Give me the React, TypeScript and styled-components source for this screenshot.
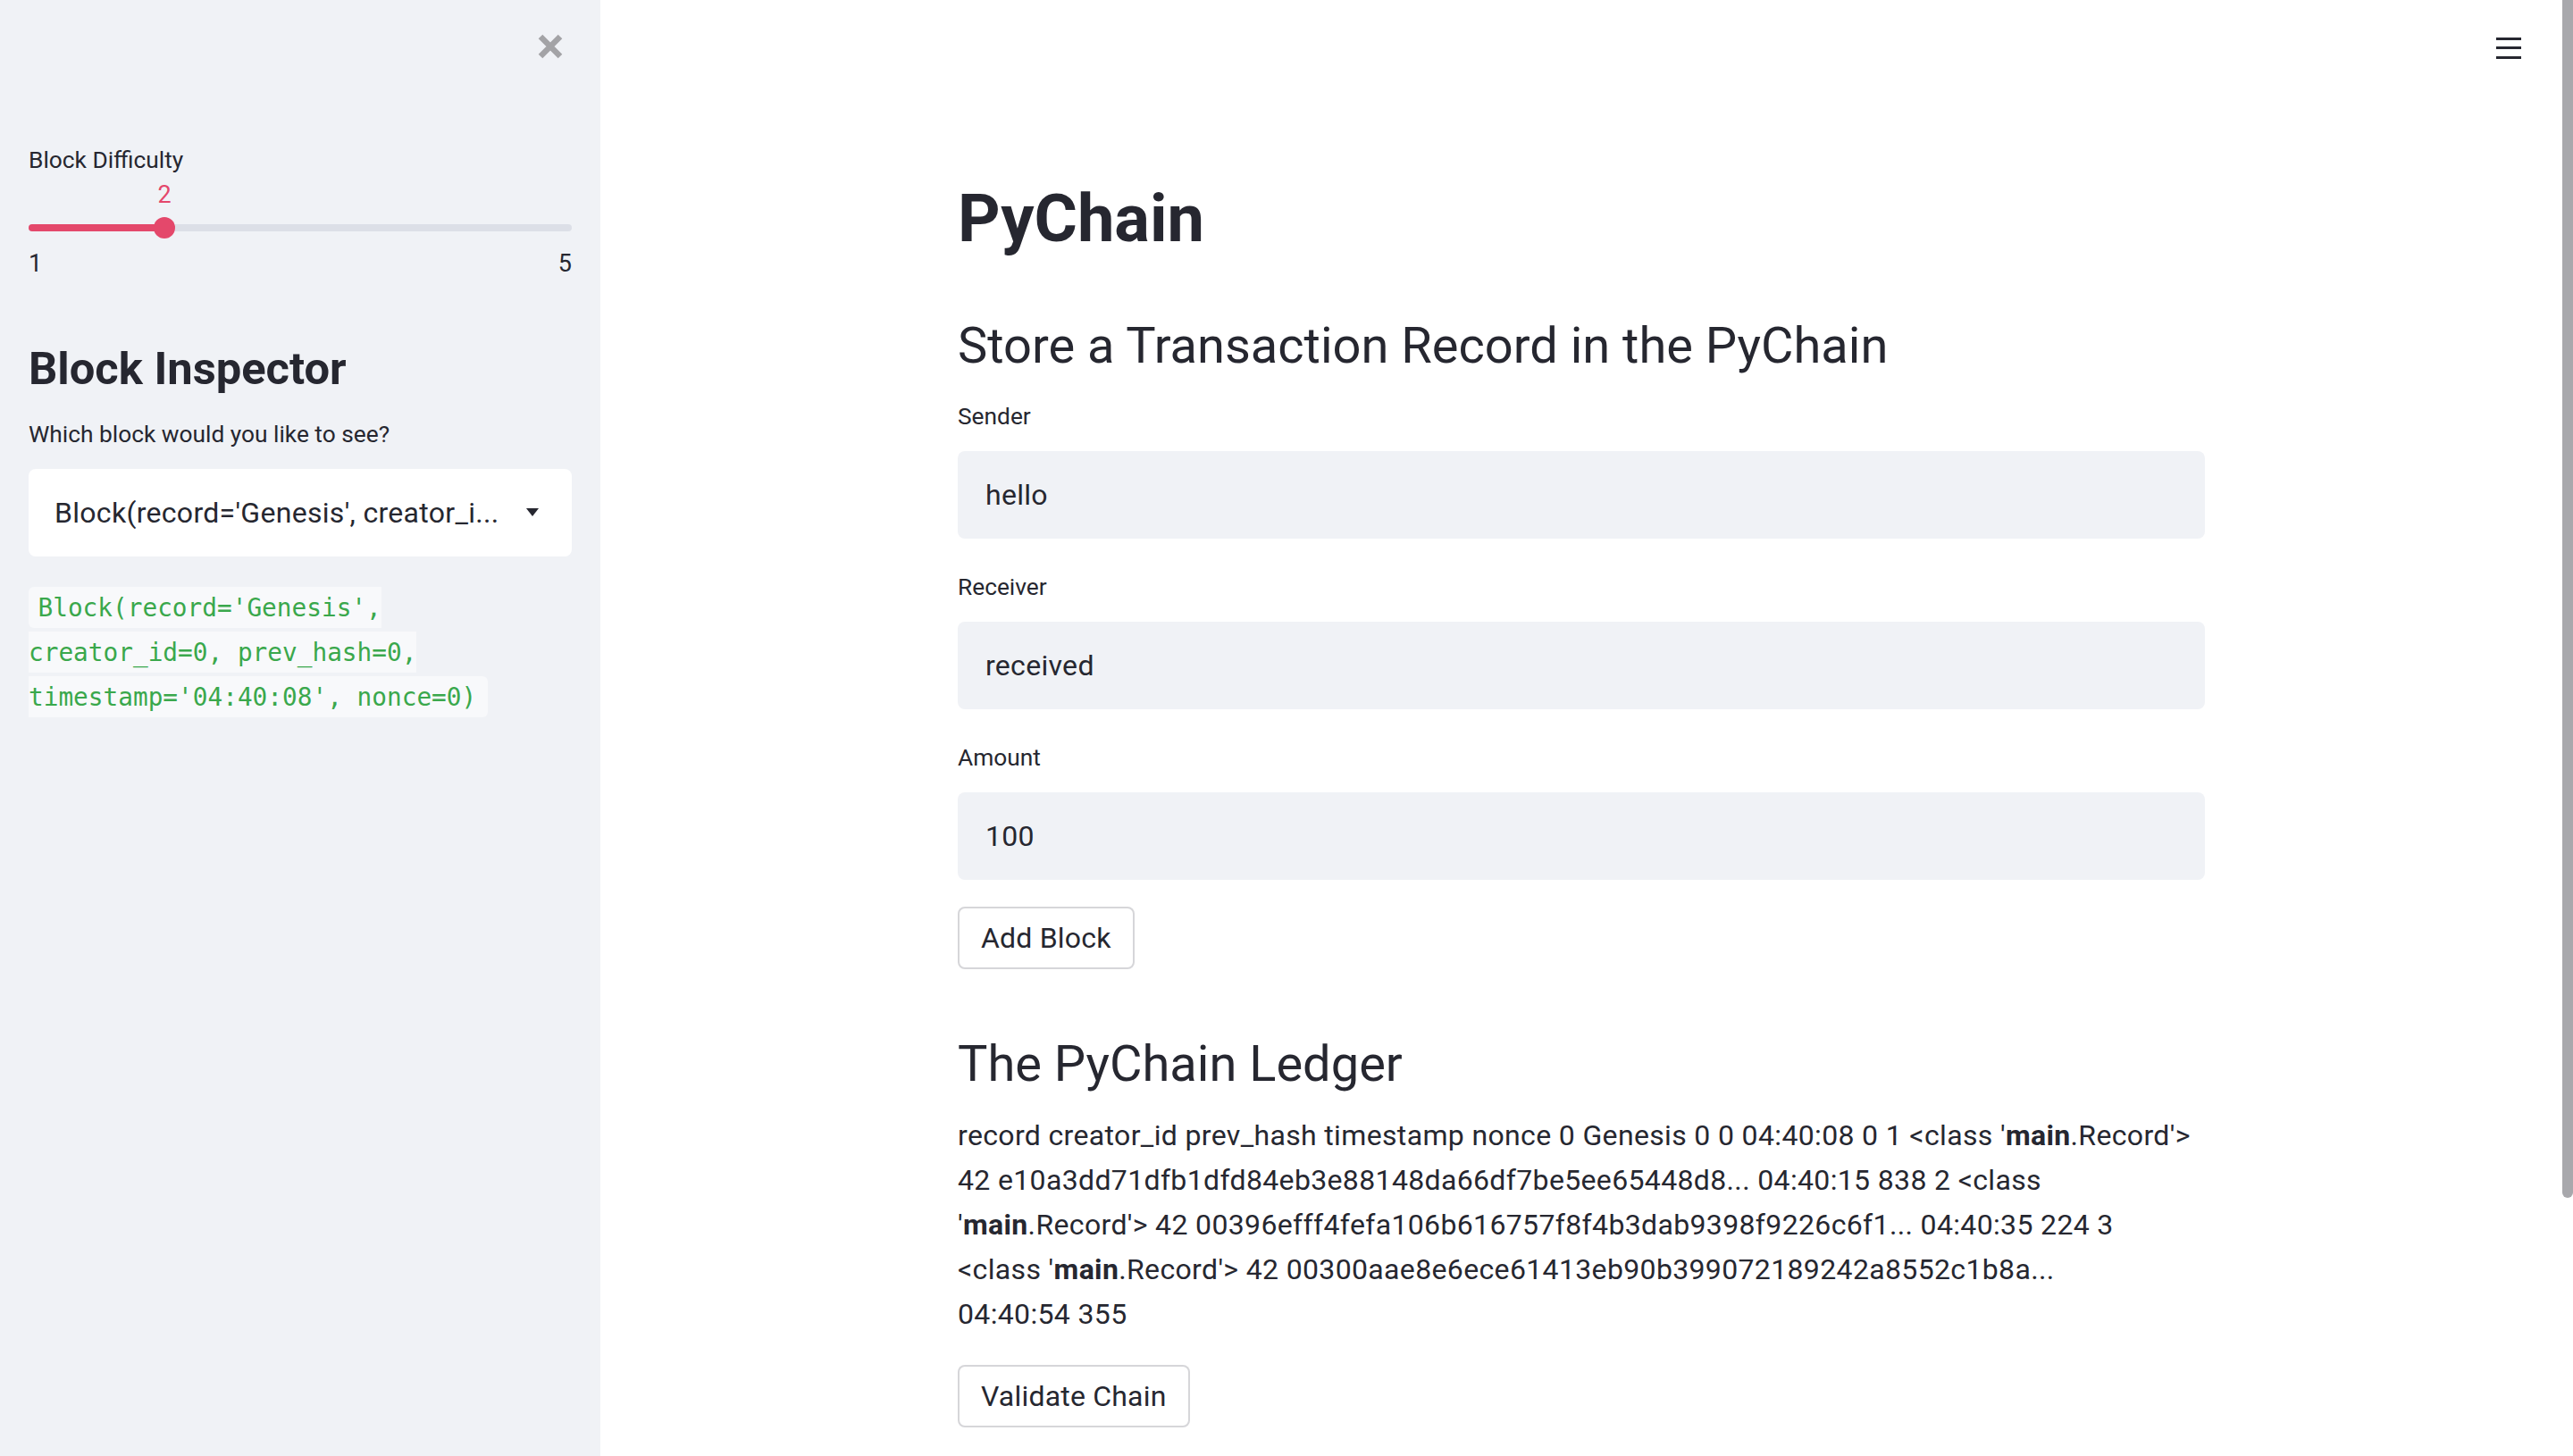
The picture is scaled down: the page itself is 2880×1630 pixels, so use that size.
import React from 'react';
import styled, { createGlobalStyle } from 'styled-components';

const GlobalStyle = createGlobalStyle`
  html, body { margin: 0; padding: 0; background: #ffffff; }
  body { font-family: Roboto, "Liberation Sans", sans-serif; color: #262730; }
  * { box-sizing: border-box; }
`;

const Shell = styled.div`
  display: flex;
  width: 2880px;
  height: 1630px;
  overflow: hidden;
`;

const Sidebar = styled.aside`
  width: 672px;
  flex: none;
  background: #f0f2f6;
  padding: 0 32px;
  display: flex;
  flex-direction: column;
`;

const SidebarTop = styled.div`
  display: flex;
  justify-content: flex-end;
  padding: 38px 10px 0 0;
  height: 66px;
`;

const CloseButton = styled.button`
  width: 28px;
  height: 28px;
  padding: 0;
  border: 0;
  background: none;
  display: flex;
`;

const WidgetLabel = styled.div<{ $mt: number }>`
  margin-top: ${(p) => p.$mt}px;
  font-size: 26.3px;
  line-height: 36px;
  height: 36px;
  color: #262730;
`;

const SliderBox = styled.div`
  margin-top: 3px;
`;

const ValueRow = styled.div`
  position: relative;
  height: 36px;
`;

const ValueBubble = styled.span`
  position: absolute;
  top: 0;
  transform: translateX(-50%);
  font-size: 27px;
  line-height: 36px;
  color: #e4486b;
`;

const TrackWrap = styled.div`
  position: relative;
  height: 24px;
  margin-top: 7.3px;
  display: flex;
  align-items: center;
`;

const Track = styled.div`
  width: 100%;
  height: 8px;
  border-radius: 4px;
  background: #dcdfe7;
  overflow: hidden;
`;

const TrackFill = styled.div`
  height: 100%;
  background: #e4486b;
`;

const Thumb = styled.div`
  position: absolute;
  top: 0;
  width: 24px;
  height: 24px;
  border-radius: 50%;
  background: #e4486b;
  transform: translateX(-50%);
`;

const RangeRow = styled.div`
  display: flex;
  justify-content: space-between;
  margin-top: 9.7px;
  font-size: 27px;
  line-height: 36px;
`;

const SideHeading = styled.h2`
  margin: 71.2px 0 0;
  font-size: 50.7px;
  line-height: 58px;
  font-weight: 700;
`;

const SelectBox = styled.div`
  margin-top: 20.6px;
  height: 98px;
  background: #ffffff;
  border-radius: 8px;
  display: flex;
  align-items: center;
  padding: 0 37px 0 29px;
`;

const SelectValue = styled.span`
  flex: 1;
  font-size: 32px;
  line-height: 40px;
  letter-spacing: 0.3px;
  white-space: nowrap;
  overflow: hidden;
`;

const CodeParagraph = styled.p`
  margin: 33px 0 0;
  font-family: "DejaVu Sans Mono", "Liberation Mono", monospace;
  font-size: 27.75px;
  line-height: 50px;
`;

const InlineCode = styled.code`
  font-family: inherit;
  color: #3aa84c;
  background: #f8f9fb;
  padding: 6.85px 13px 6.85px 10.5px;
  border-radius: 6px;
`;

const Main = styled.main`
  flex: 1;
  min-width: 0;
  position: relative;
  display: flex;
`;

const MenuButton = styled.button`
  position: absolute;
  top: 41px;
  right: 58px;
  width: 28px;
  height: 26px;
  padding: 0;
  border: 0;
  background: none;
  display: flex;
`;

const MainScroll = styled.div`
  flex: 1;
  padding-top: 200.7px;
`;

const ScrollTrack = styled.div`
  width: 12px;
  flex: none;
`;

const ScrollThumb = styled.div`
  height: 1341px;
  background: #a8a8ac;
  border-radius: 0 0 6px 6px;
`;

const Block = styled.div`
  width: 1396px;
  margin: 0 auto;
`;

const Title = styled.h1`
  margin: 0;
  font-size: 74px;
  line-height: 88px;
  font-weight: 700;
`;

const Subheader = styled.h3<{ $mt: number }>`
  margin: ${(p) => p.$mt}px 0 0;
  font-size: 56px;
  line-height: 68px;
  font-weight: 400;
`;

const TextInput = styled.input`
  display: block;
  width: 100%;
  height: 98px;
  margin-top: 20.6px;
  border: 0;
  border-radius: 8px;
  background: #f0f2f6;
  padding: 0 31px;
  font-family: inherit;
  font-size: 32px;
  letter-spacing: 0.3px;
  color: #262730;
  outline: none;
`;

const Button = styled.button<{ $mt: number }>`
  display: block;
  margin-top: ${(p) => p.$mt}px;
  height: 70px;
  padding: 0 24px;
  border: 2px solid rgba(49, 51, 63, 0.2);
  border-radius: 8px;
  background: #ffffff;
  font-family: inherit;
  font-size: 32px;
  letter-spacing: 0.2px;
  color: #262730;
`;

const Ledger = styled.p`
  margin: 21.5px 0 0;
  font-size: 32px;
  line-height: 50px;
  letter-spacing: 0.35px;
`;

const CloseIcon = () => (
  <svg width="28" height="28" viewBox="0 0 28 28">
    <path d="M3 3 L25 25 M25 3 L3 25" stroke="#a3a3a6" strokeWidth="6.5" />
  </svg>
);

const MenuIcon = () => (
  <svg width="28" height="26" viewBox="0 0 28 26">
    <rect x="0" y="1" width="28" height="3" fill="#262730" />
    <rect x="0" y="11" width="28" height="3" fill="#262730" />
    <rect x="0" y="22" width="28" height="3" fill="#262730" />
  </svg>
);

const CaretIcon = () => (
  <svg width="14" height="9" viewBox="0 0 14 9">
    <path d="M0 0 H14 L7 9 Z" fill="#262730" />
  </svg>
);

const ledgerLines: React.ReactNode[] = [
  <>record creator_id prev_hash timestamp nonce 0 Genesis 0 0 04:40:08 0 1 &lt;class '<b>main</b>.Record'&gt;</>,
  <>42 e10a3dd71dfb1dfd84eb3e88148da66df7be5ee65448d8... 04:40:15 838 2 &lt;class</>,
  <>'<b>main</b>.Record'&gt; 42 00396efff4fefa106b616757f8f4b3dab9398f9226c6f1... 04:40:35 224 3</>,
  <>&lt;class '<b>main</b>.Record'&gt; 42 00300aae8e6ece61413eb90b399072189242a8552c1b8a...</>,
  <>04:40:54 355</>,
];

export default function App() {
  const min = 1;
  const max = 5;
  const value = 2;
  const pct = ((value - min) / (max - min)) * 100;
  return (
    <>
      <GlobalStyle />
      <Shell>
        <Sidebar>
          <SidebarTop>
            <CloseButton aria-label="Close sidebar">
              <CloseIcon />
            </CloseButton>
          </SidebarTop>
          <WidgetLabel $mt={95}>Block Difficulty</WidgetLabel>
          <SliderBox>
            <ValueRow>
              <ValueBubble style={{ left: `${pct}%` }}>{value}</ValueBubble>
            </ValueRow>
            <TrackWrap>
              <Track>
                <TrackFill style={{ width: `${pct}%` }} />
              </Track>
              <Thumb style={{ left: `${pct}%` }} />
            </TrackWrap>
            <RangeRow>
              <span>{min}</span>
              <span>{max}</span>
            </RangeRow>
          </SliderBox>
          <SideHeading>Block Inspector</SideHeading>
          <WidgetLabel $mt={25.8}>Which block would you like to see?</WidgetLabel>
          <SelectBox>
            <SelectValue>Block(record='Genesis', creator_i...</SelectValue>
            <CaretIcon />
          </SelectBox>
          <CodeParagraph>
            <InlineCode>Block(record='Genesis', creator_id=0, prev_hash=0, timestamp='04:40:08', nonce=0)</InlineCode>
          </CodeParagraph>
        </Sidebar>
        <Main>
          <MenuButton aria-label="Menu">
            <MenuIcon />
          </MenuButton>
          <MainScroll>
            <Block>
              <Title>PyChain</Title>
              <Subheader $mt={64.1}>Store a Transaction Record in the PyChain</Subheader>
              <WidgetLabel $mt={27.6}>Sender</WidgetLabel>
              <TextInput readOnly value="hello" />
              <WidgetLabel $mt={36.4}>Receiver</WidgetLabel>
              <TextInput readOnly value="received" />
              <WidgetLabel $mt={36.4}>Amount</WidgetLabel>
              <TextInput readOnly value="100" />
              <Button $mt={30}>Add Block</Button>
              <Subheader $mt={71.8}>The PyChain Ledger</Subheader>
              <Ledger>
                {ledgerLines.map((line, i) => (
                  <React.Fragment key={i}>
                    {i > 0 && <br />}
                    {line}
                  </React.Fragment>
                ))}
              </Ledger>
              <Button $mt={32}>Validate Chain</Button>
            </Block>
          </MainScroll>
          <ScrollTrack>
            <ScrollThumb />
          </ScrollTrack>
        </Main>
      </Shell>
    </>
  );
}
